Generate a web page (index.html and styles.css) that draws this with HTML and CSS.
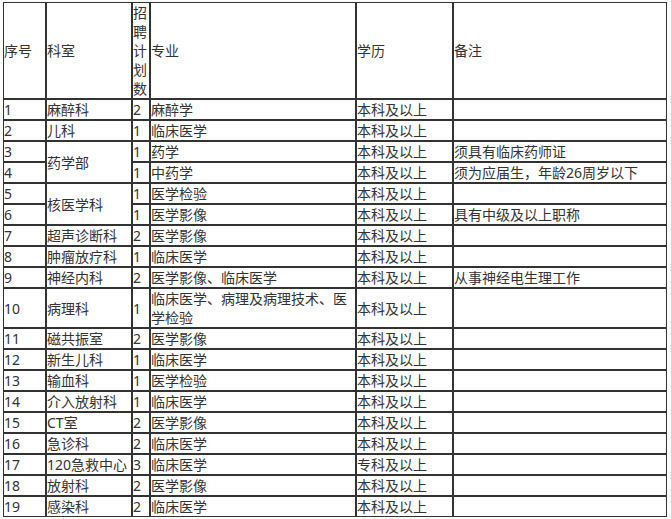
FILE: index.html
```html
<!DOCTYPE html>
<html lang="zh-CN">
<head>
<meta charset="utf-8">
<title>招聘计划</title>
<link rel="stylesheet" href="styles.css">
</head>
<body>
<table class="plan">
  <thead>
    <tr>
      <th class="c-no">序号</th>
      <th class="c-dept">科室</th>
      <th class="c-num">招聘计划数</th>
      <th class="c-major">专业</th>
      <th class="c-edu">学历</th>
      <th class="c-note">备注</th>
    </tr>
  </thead>
  <tbody>
    <tr><td>1</td><td>麻醉科</td><td>2</td><td>麻醉学</td><td>本科及以上</td><td></td></tr>
    <tr><td>2</td><td>儿科</td><td>1</td><td>临床医学</td><td>本科及以上</td><td></td></tr>
    <tr><td>3</td><td rowspan="2">药学部</td><td>1</td><td>药学</td><td>本科及以上</td><td>须具有临床药师证</td></tr>
    <tr><td>4</td><td>1</td><td>中药学</td><td>本科及以上</td><td>须为应届生，年龄26周岁以下</td></tr>
    <tr><td>5</td><td rowspan="2">核医学科</td><td>1</td><td>医学检验</td><td>本科及以上</td><td></td></tr>
    <tr><td>6</td><td>1</td><td>医学影像</td><td>本科及以上</td><td>具有中级及以上职称</td></tr>
    <tr><td>7</td><td>超声诊断科</td><td>2</td><td>医学影像</td><td>本科及以上</td><td></td></tr>
    <tr><td>8</td><td>肿瘤放疗科</td><td>1</td><td>临床医学</td><td>本科及以上</td><td></td></tr>
    <tr><td>9</td><td>神经内科</td><td>2</td><td>医学影像、临床医学</td><td>本科及以上</td><td>从事神经电生理工作</td></tr>
    <tr><td>10</td><td>病理科</td><td>1</td><td>临床医学、病理及病理技术、医学检验</td><td>本科及以上</td><td></td></tr>
    <tr><td>11</td><td>磁共振室</td><td>2</td><td>医学影像</td><td>本科及以上</td><td></td></tr>
    <tr><td>12</td><td>新生儿科</td><td>1</td><td>临床医学</td><td>本科及以上</td><td></td></tr>
    <tr><td>13</td><td>输血科</td><td>1</td><td>医学检验</td><td>本科及以上</td><td></td></tr>
    <tr><td>14</td><td>介入放射科</td><td>1</td><td>临床医学</td><td>本科及以上</td><td></td></tr>
    <tr><td>15</td><td>CT室</td><td>2</td><td>医学影像</td><td>本科及以上</td><td></td></tr>
    <tr><td>16</td><td>急诊科</td><td>2</td><td>临床医学</td><td>本科及以上</td><td></td></tr>
    <tr><td>17</td><td>120急救中心</td><td>3</td><td>临床医学</td><td>专科及以上</td><td></td></tr>
    <tr><td>18</td><td>放射科</td><td>2</td><td>医学影像</td><td>本科及以上</td><td></td></tr>
    <tr><td>19</td><td>感染科</td><td>2</td><td>临床医学</td><td>本科及以上</td><td></td></tr>
  </tbody>
</table>
</body>
</html>
```
FILE: styles.css
```css
html, body {
  background: #ffffff;
}
body {
  margin: 2px 0 0 3px;
  font-family: "Noto Sans", "Noto Sans CJK SC", sans-serif;
  font-size: 14px;
  line-height: 19px;
  color: #333333;
}
.plan {
  width: 664px;
  table-layout: fixed;
  border-collapse: separate;
  border-spacing: 0;
}
.plan th,
.plan td {
  box-sizing: border-box;
  border: 1px solid #333333;
  padding: 0;
  font-weight: normal;
  text-align: left;
  vertical-align: middle;
  line-height: 19px;
  word-break: break-all;
}
.c-no { width: 43px; }
.c-dept { width: 86px; }
.c-num { width: 18px; }
.c-major { width: 206px; }
.c-edu { width: 97px; }
.c-note { width: 214px; }
```
